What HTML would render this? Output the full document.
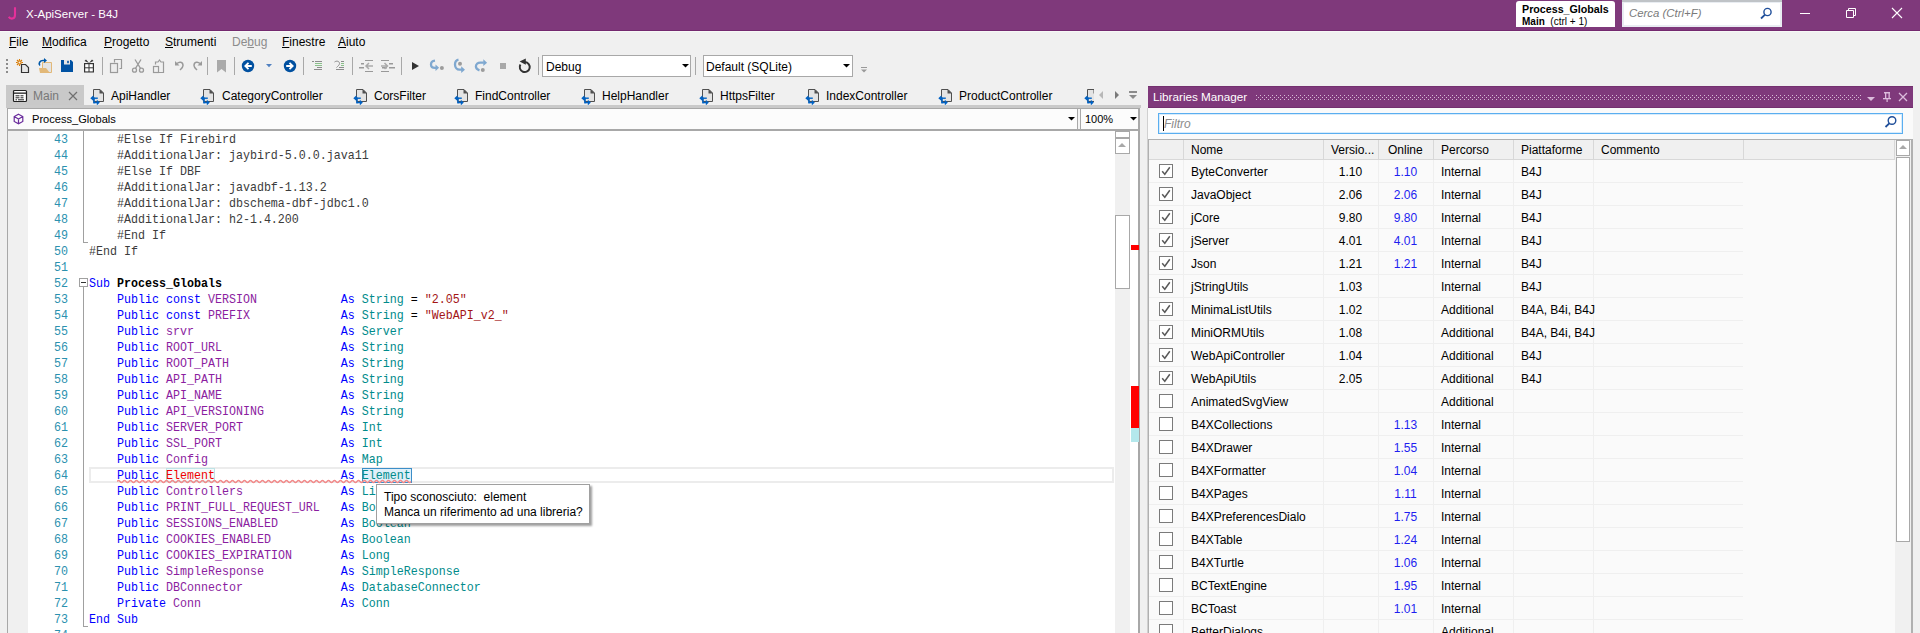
<!DOCTYPE html><html><head><meta charset="utf-8"><style>
*{margin:0;padding:0;box-sizing:border-box}
html,body{width:1920px;height:633px;overflow:hidden;background:#f0f0f0;font-family:"Liberation Sans",sans-serif;font-size:12px;color:#000}
.ab{position:absolute}
.t{position:absolute;white-space:pre;line-height:14px}
.u{text-decoration:underline;text-underline-offset:1px}
.code{position:absolute;font-family:"Liberation Mono",monospace;font-size:11.67px;white-space:pre;line-height:16px;transform:scaleY(1.06);transform-origin:0 11px}
.kw{color:#0000ff}.vr{color:#8b1ea0}.ty{color:#008b8b}.st{color:#a31515}.pp{color:#3c3c3c}.ln{color:#2b91af}
</style></head><body>

<div class="ab" style="left:0;top:0;width:1920px;height:31px;background:#7f397b;border-bottom:1px solid #74296f"></div>
<div class="ab" style="left:0;top:31px;width:1920px;height:1px;background:#f6f8f6"></div>
<svg class="ab" style="left:0;top:0" width="24" height="24"><path d="M15 7.2v7.8c0 2.6-1.3 3.6-3.2 3.6c-1.4 0-2.4-0.6-3-1.8" fill="none" stroke="#e6309a" stroke-width="2.1"/></svg>
<div class="t" style="left:26px;top:7px;color:#fff;font-size:11.5px">X-ApiServer - B4J</div>
<div class="ab" style="left:1516px;top:1px;width:99px;height:26px;background:#fff;border-radius:3px 3px 0 0"></div>
<div class="t" style="left:1522px;top:2px;font-weight:bold;font-size:10.7px">Process_Globals</div>
<div class="t" style="left:1522px;top:15px;font-weight:bold;font-size:10px">Main <span style="font-weight:normal">&nbsp;(ctrl + 1)</span></div>
<div class="ab" style="left:1622px;top:0;width:160px;height:27px;background:#e9edf2;border-top:2px solid #bfc3c7"></div>
<div class="ab" style="left:1624px;top:3px;width:156px;height:22px;background:#fff"></div>
<div class="t" style="left:1629px;top:6px;font-style:italic;color:#7a7a7a;font-size:11.4px">Cerca (Ctrl+F)</div>
<svg class="ab" style="left:1758px;top:6px" width="16" height="14"><circle cx="9.5" cy="6" r="3.6" fill="none" stroke="#1f4e9a" stroke-width="1.4"/><path d="M7 8.6L3 12.5" stroke="#1f4e9a" stroke-width="1.8"/></svg>
<div class="ab" style="left:1800px;top:13px;width:10px;height:1px;background:#fff"></div>
<svg class="ab" style="left:1840px;top:4px" width="20" height="20"><path d="M6.5 6.5h7v7h-7z M8.5 6.5v-2h7v7h-2" fill="none" stroke="#fff" stroke-width="1"/></svg>
<svg class="ab" style="left:1890px;top:6px" width="14" height="14"><path d="M2 2L12 12M12 2L2 12" stroke="#fff" stroke-width="1.1"/></svg>
<div class="t" style="left:9px;top:35px;color:#000"><span class="u">F</span>ile</div>
<div class="t" style="left:42px;top:35px;color:#000"><span class="u">M</span>odifica</div>
<div class="t" style="left:104px;top:35px;color:#000"><span class="u">P</span>rogetto</div>
<div class="t" style="left:165px;top:35px;color:#000"><span class="u">S</span>trumenti</div>
<div class="t" style="left:232px;top:35px;color:#8c8c8c">De<span class="u">b</span>ug</div>
<div class="t" style="left:282px;top:35px;color:#000"><span class="u">F</span>inestre</div>
<div class="t" style="left:338px;top:35px;color:#000"><span class="u">A</span>iuto</div>
<svg class="ab" style="left:0;top:0" width="900" height="82"><rect x="6" y="59" width="2" height="2" fill="#8c8c8c"/><rect x="6" y="63" width="2" height="2" fill="#8c8c8c"/><rect x="6" y="67" width="2" height="2" fill="#8c8c8c"/><rect x="6" y="71" width="2" height="2" fill="#8c8c8c"/><g stroke="#d97a00" stroke-width="1.1"><circle cx="19.5" cy="62.5" r="1.6" fill="none"/><path d="M19.5 59v1.4M19.5 64.6V66M16 62.5h1.4M21.6 62.5H23M17 60l1 1M21 64l1 1M22 60l-1 1M17 65l1-1"/></g><path d="M21.5 64.5h4l3 3v5h-7z" fill="#e6e6e6" stroke="#333" stroke-width="1.2"/><path d="M42.5 62.5h9v10h-9z" fill="#e4e4e4" stroke="#e2b878" stroke-width="1"/><path d="M39 68h7l4 5h-10z" fill="#e2b878"/><path d="M40 65.5c-2-2 0-5 3-5h2" fill="none" stroke="#0058a8" stroke-width="1.6"/><path d="M44 58l3 2.5l-3 2.5z" fill="#0058a8"/><path d="M61 60h10l2 2v10h-12z" fill="#0052a3"/><rect x="64" y="60" width="6" height="4.5" fill="#e6e6e6"/><rect x="67.2" y="60.8" width="1.6" height="2.4" fill="#0052a3"/><rect x="84" y="63" width="10" height="9.5" fill="#333"/><g fill="#fff"><rect x="85.2" y="64.2" width="3.3" height="3.1"/><rect x="89.5" y="64.2" width="3.3" height="3.1"/><rect x="85.2" y="68.3" width="3.3" height="3.1"/><rect x="89.5" y="68.3" width="3.3" height="3.1"/></g><path d="M89 63l-3-3.5l-1.5 1.5zM89 63l3-3.5l1.5 1.5z" fill="#333"/><rect x="102" y="57" width="1" height="18" fill="#a8a8a8"/><rect x="207" y="57" width="1" height="18" fill="#a8a8a8"/><rect x="234" y="57" width="1" height="18" fill="#a8a8a8"/><rect x="303" y="57" width="1" height="18" fill="#a8a8a8"/><rect x="352" y="57" width="1" height="18" fill="#a8a8a8"/><rect x="401" y="57" width="1" height="18" fill="#a8a8a8"/><rect x="538" y="57" width="1" height="18" fill="#a8a8a8"/><rect x="695" y="57" width="1" height="18" fill="#a8a8a8"/><g fill="none" stroke="#9a9a9a" stroke-width="1.2"><path d="M114.5 62.5v-3h7v9h-2"/><rect x="110.5" y="63.5" width="7" height="9" fill="#ececec"/></g><g fill="none" stroke="#9a9a9a" stroke-width="1.3"><circle cx="134.5" cy="70.2" r="2"/><circle cx="141.5" cy="70.2" r="2"/><path d="M135.5 68.3L141 59.5M140.5 68.3L135 59.5"/></g><g fill="none" stroke="#9a9a9a" stroke-width="1.2"><path d="M155.5 64.5v-2.5h2.5l1.5-2l1.5 2h2.5v10.5h-4.5"/><rect x="153.5" y="66.5" width="5" height="6"/></g><g fill="none" stroke="#9a9a9a" stroke-width="1.5"><path d="M177 63.5c2-2 6-2 6 2c0 2-2 3.5-3 4.5"/><path d="M200 63.5c-2-2-6-2-6 2c0 2 2 3.5 3 4.5"/></g><path d="M175 61v4.5h4.5z" fill="#9a9a9a"/><path d="M202 61v4.5h-4.5z" fill="#9a9a9a"/><path d="M217 60h9v12.5l-4.5-3.5l-4.5 3.5z" fill="#aaaaaa"/><circle cx="248" cy="66" r="6.2" fill="#0050a0"/><path d="M251.8 66h-6M248.5 62.8l-3.2 3.2l3.2 3.2" fill="none" stroke="#fff" stroke-width="1.8"/><path d="M266 64h6l-3 3.3z" fill="#5080c0"/><circle cx="290" cy="66" r="6.2" fill="#0050a0"/><path d="M286.2 66h6M289.5 62.8l3.2 3.2l-3.2 3.2" fill="none" stroke="#fff" stroke-width="1.8"/><g fill="#8c8c8c"><rect x="312" y="61" width="2" height="1"/><rect x="315" y="61" width="7" height="1"/><rect x="317" y="67" width="5" height="1"/><rect x="314" y="69" width="8" height="1"/></g><g fill="#8ac08a"><rect x="315" y="63" width="7" height="1"/><rect x="315" y="65" width="7" height="1"/></g><g fill="#8c8c8c"><rect x="341" y="61" width="3" height="1"/><rect x="339" y="67" width="5" height="1"/><rect x="336" y="69" width="8" height="1"/></g><g fill="#8ac08a"><rect x="341" y="63" width="3" height="1"/><rect x="341" y="65" width="3" height="1"/></g><path d="M334.5 62c2-1.5 5-1 5 1.5c0 1.5-2 3-3 4" fill="none" stroke="#8c8c8c" stroke-width="1"/><g fill="#999"><rect x="365" y="60" width="8" height="1"/><rect x="365" y="71" width="8" height="1"/><rect x="361" y="63" width="3" height="1.5"/><rect x="359" y="67" width="5" height="1.5"/><rect x="382" y="67" width="5" height="1.5"/><rect x="389" y="63" width="4" height="1.5"/><rect x="389" y="67" width="6" height="1.5"/><rect x="381" y="60" width="8" height="1"/><rect x="381" y="71" width="8" height="1"/></g><g fill="none" stroke="#aaa" stroke-width="1.5"><path d="M373 66h-7M369 63l-3 3l3 3M381 66h7M384.5 63l3 3l-3 3"/></g><path d="M412 62v8l7-4z" fill="#333"/><g fill="none" stroke="#7fa8d0" stroke-width="2.3" stroke-linecap="butt"><path d="M435 60.6c-2.6 0.3-4 2-4 3.8c0 2.2 1.8 3.4 4 3.4h1.5"/><path d="M458.5 59.6c-2.6 0.5-3.5 2.6-3.5 4.9c0 3 2 5.2 4.5 5.2h2.5"/><path d="M479.5 70.4c-2.4-0.8-3.6-2.2-3.6-3.8c0-2.4 2-3.9 4.4-3.9h3.5"/></g><g fill="#7fa8d0"><path d="M435.5 64.6l3.6 3.2l-3.6 3.2z"/><path d="M461.2 66.3l3.8 3.4l-3.8 3.4z"/><path d="M483.3 59.3l3.8 3.4l-3.8 3.4z"/></g><g fill="#9c9c9c"><circle cx="441.9" cy="68" r="2"/><circle cx="460" cy="63.8" r="2"/><circle cx="482.8" cy="69.9" r="2"/></g><rect x="500" y="63" width="6" height="6" fill="#a8a8a8"/><path d="M520.4 64.6A5 5 0 1 0 525 62.1" fill="none" stroke="#333" stroke-width="2"/><path d="M519.6 61.6L525.8 58.4V64.8z" fill="#333"/></svg>
<div class="ab" style="left:542px;top:55px;width:149px;height:22px;background:#fff;border:1px solid #a8a8a8"></div>
<div class="t" style="left:546px;top:60px">Debug</div>
<svg class="ab" style="left:682px;top:64px" width="8" height="5"><path d="M0 0h7l-3.5 3.5z" fill="#000"/></svg>
<div class="ab" style="left:703px;top:55px;width:150px;height:22px;background:#fff;border:1px solid #a8a8a8"></div>
<div class="t" style="left:706px;top:60px">Default (SQLite)</div>
<svg class="ab" style="left:843px;top:64px" width="8" height="5"><path d="M0 0h7l-3.5 3.5z" fill="#000"/></svg>
<svg class="ab" style="left:861px;top:67px" width="7" height="7"><rect x="0" y="0" width="6" height="1" fill="#999"/><path d="M0 2.5h6l-3 3z" fill="#999"/></svg>
<div class="ab" style="left:6px;top:85px;width:78px;height:20px;background:#c9c9c9"></div>
<div class="ab" style="left:6px;top:105px;width:1135px;height:3px;background:#cacaca"></div>
<svg class="ab" style="left:12px;top:89px" width="16" height="14"><rect x="1.5" y="1.5" width="13" height="11" rx="1" fill="#fff" stroke="#222" stroke-width="1.2"/><rect x="1.5" y="3.5" width="13" height="1.3" fill="#222"/><g fill="#222"><rect x="3.5" y="6.3" width="4" height="1"/><rect x="8.5" y="6.3" width="3" height="1"/><rect x="3.5" y="8.3" width="4" height="1"/><rect x="8.5" y="8.3" width="3" height="1"/><rect x="3.5" y="10.3" width="1.5" height="1"/><rect x="6" y="10.3" width="6" height="1"/></g></svg>
<div class="t" style="left:33px;top:89px;color:#787878">Main</div>
<svg class="ab" style="left:68px;top:91px" width="10" height="10"><path d="M1 1L9 9M9 1L1 9" stroke="#707070" stroke-width="1.2"/></svg>
<svg class="ab" style="left:90px;top:88px" width="15" height="17"><path d="M3.5 1.5h6.5l3.5 3.5v8.5h-10z" fill="#e4e4e4" stroke="#505050" stroke-width="1"/><path d="M9.5 1v4.5h4.5z" fill="#505050"/><rect x="1" y="8" width="8.5" height="8.5" fill="#f0f0f0" opacity="0.0"/><g fill="#0062c4"><path d="M0.3 10.2l3.2-2.9v5.8z"/><rect x="3" y="9.5" width="4.8" height="1.4"/><rect x="3.3" y="9.5" width="1.5" height="5.8"/><rect x="3.3" y="13.9" width="3.8" height="1.4"/><path d="M9.8 14.6l-3-2.8v5.6z"/></g></svg>
<div class="t" style="left:111px;top:89px">ApiHandler</div>
<svg class="ab" style="left:200px;top:88px" width="15" height="17"><path d="M3.5 1.5h6.5l3.5 3.5v8.5h-10z" fill="#e4e4e4" stroke="#505050" stroke-width="1"/><path d="M9.5 1v4.5h4.5z" fill="#505050"/><rect x="1" y="8" width="8.5" height="8.5" fill="#f0f0f0" opacity="0.0"/><g fill="#0062c4"><path d="M0.3 10.2l3.2-2.9v5.8z"/><rect x="3" y="9.5" width="4.8" height="1.4"/><rect x="3.3" y="9.5" width="1.5" height="5.8"/><rect x="3.3" y="13.9" width="3.8" height="1.4"/><path d="M9.8 14.6l-3-2.8v5.6z"/></g></svg>
<div class="t" style="left:222px;top:89px">CategoryController</div>
<svg class="ab" style="left:353px;top:88px" width="15" height="17"><path d="M3.5 1.5h6.5l3.5 3.5v8.5h-10z" fill="#e4e4e4" stroke="#505050" stroke-width="1"/><path d="M9.5 1v4.5h4.5z" fill="#505050"/><rect x="1" y="8" width="8.5" height="8.5" fill="#f0f0f0" opacity="0.0"/><g fill="#0062c4"><path d="M0.3 10.2l3.2-2.9v5.8z"/><rect x="3" y="9.5" width="4.8" height="1.4"/><rect x="3.3" y="9.5" width="1.5" height="5.8"/><rect x="3.3" y="13.9" width="3.8" height="1.4"/><path d="M9.8 14.6l-3-2.8v5.6z"/></g></svg>
<div class="t" style="left:374px;top:89px">CorsFilter</div>
<svg class="ab" style="left:454px;top:88px" width="15" height="17"><path d="M3.5 1.5h6.5l3.5 3.5v8.5h-10z" fill="#e4e4e4" stroke="#505050" stroke-width="1"/><path d="M9.5 1v4.5h4.5z" fill="#505050"/><rect x="1" y="8" width="8.5" height="8.5" fill="#f0f0f0" opacity="0.0"/><g fill="#0062c4"><path d="M0.3 10.2l3.2-2.9v5.8z"/><rect x="3" y="9.5" width="4.8" height="1.4"/><rect x="3.3" y="9.5" width="1.5" height="5.8"/><rect x="3.3" y="13.9" width="3.8" height="1.4"/><path d="M9.8 14.6l-3-2.8v5.6z"/></g></svg>
<div class="t" style="left:475px;top:89px">FindController</div>
<svg class="ab" style="left:581px;top:88px" width="15" height="17"><path d="M3.5 1.5h6.5l3.5 3.5v8.5h-10z" fill="#e4e4e4" stroke="#505050" stroke-width="1"/><path d="M9.5 1v4.5h4.5z" fill="#505050"/><rect x="1" y="8" width="8.5" height="8.5" fill="#f0f0f0" opacity="0.0"/><g fill="#0062c4"><path d="M0.3 10.2l3.2-2.9v5.8z"/><rect x="3" y="9.5" width="4.8" height="1.4"/><rect x="3.3" y="9.5" width="1.5" height="5.8"/><rect x="3.3" y="13.9" width="3.8" height="1.4"/><path d="M9.8 14.6l-3-2.8v5.6z"/></g></svg>
<div class="t" style="left:602px;top:89px">HelpHandler</div>
<svg class="ab" style="left:699px;top:88px" width="15" height="17"><path d="M3.5 1.5h6.5l3.5 3.5v8.5h-10z" fill="#e4e4e4" stroke="#505050" stroke-width="1"/><path d="M9.5 1v4.5h4.5z" fill="#505050"/><rect x="1" y="8" width="8.5" height="8.5" fill="#f0f0f0" opacity="0.0"/><g fill="#0062c4"><path d="M0.3 10.2l3.2-2.9v5.8z"/><rect x="3" y="9.5" width="4.8" height="1.4"/><rect x="3.3" y="9.5" width="1.5" height="5.8"/><rect x="3.3" y="13.9" width="3.8" height="1.4"/><path d="M9.8 14.6l-3-2.8v5.6z"/></g></svg>
<div class="t" style="left:720px;top:89px">HttpsFilter</div>
<svg class="ab" style="left:805px;top:88px" width="15" height="17"><path d="M3.5 1.5h6.5l3.5 3.5v8.5h-10z" fill="#e4e4e4" stroke="#505050" stroke-width="1"/><path d="M9.5 1v4.5h4.5z" fill="#505050"/><rect x="1" y="8" width="8.5" height="8.5" fill="#f0f0f0" opacity="0.0"/><g fill="#0062c4"><path d="M0.3 10.2l3.2-2.9v5.8z"/><rect x="3" y="9.5" width="4.8" height="1.4"/><rect x="3.3" y="9.5" width="1.5" height="5.8"/><rect x="3.3" y="13.9" width="3.8" height="1.4"/><path d="M9.8 14.6l-3-2.8v5.6z"/></g></svg>
<div class="t" style="left:826px;top:89px">IndexController</div>
<svg class="ab" style="left:938px;top:88px" width="15" height="17"><path d="M3.5 1.5h6.5l3.5 3.5v8.5h-10z" fill="#e4e4e4" stroke="#505050" stroke-width="1"/><path d="M9.5 1v4.5h4.5z" fill="#505050"/><rect x="1" y="8" width="8.5" height="8.5" fill="#f0f0f0" opacity="0.0"/><g fill="#0062c4"><path d="M0.3 10.2l3.2-2.9v5.8z"/><rect x="3" y="9.5" width="4.8" height="1.4"/><rect x="3.3" y="9.5" width="1.5" height="5.8"/><rect x="3.3" y="13.9" width="3.8" height="1.4"/><path d="M9.8 14.6l-3-2.8v5.6z"/></g></svg>
<div class="t" style="left:959px;top:89px">ProductController</div>
<div style="position:absolute;left:1083px;top:0;width:11px;height:108px;overflow:hidden"><svg class="ab" style="left:1px;top:88px" width="15" height="17"><path d="M3.5 1.5h6.5l3.5 3.5v8.5h-10z" fill="#e4e4e4" stroke="#505050" stroke-width="1"/><path d="M9.5 1v4.5h4.5z" fill="#505050"/><rect x="1" y="8" width="8.5" height="8.5" fill="#f0f0f0" opacity="0.0"/><g fill="#0062c4"><path d="M0.3 10.2l3.2-2.9v5.8z"/><rect x="3" y="9.5" width="4.8" height="1.4"/><rect x="3.3" y="9.5" width="1.5" height="5.8"/><rect x="3.3" y="13.9" width="3.8" height="1.4"/><path d="M9.8 14.6l-3-2.8v5.6z"/></g></svg></div>
<svg class="ab" style="left:1097px;top:90px" width="44" height="10"><path d="M6 1v8l-4-4z" fill="#b8b8b8"/><path d="M18 1v8l4-4z" fill="#7a7a7a"/><rect x="32" y="1" width="8" height="2" fill="#8c8c8c"/><path d="M32 5h8l-4 4z" fill="#8c8c8c"/></svg>
<div class="ab" style="left:7px;top:108px;width:1133px;height:525px;background:#fff;border-left:1px solid #a8a8a8;border-right:2px solid #a8a8a8;border-top:1px solid #a8a8a8"></div>
<div class="ab" style="left:8px;top:109px;width:1070px;height:20px;background:#fcfcfc;border-right:1px solid #a8a8a8"></div>
<div class="ab" style="left:1078px;top:109px;width:2px;height:20px;background:#f4f4f4"></div>
<div class="ab" style="left:1080px;top:109px;width:58px;height:20px;background:#fcfcfc;border-left:1px solid #a8a8a8"></div>
<div class="ab" style="left:8px;top:129px;width:1130px;height:2px;background:#a8a8a8"></div>
<svg class="ab" style="left:13px;top:113px" width="12" height="12"><path d="M5.5 1.2L9.8 3.6v4.8L5.5 10.8L1.2 8.4V3.6z M1.2 3.6L5.5 6L9.8 3.6M5.5 6v4.8" fill="none" stroke="#6a2c9c" stroke-width="1.2"/></svg>
<div class="t" style="left:32px;top:112px;font-size:11.1px">Process_Globals</div>
<svg class="ab" style="left:1068px;top:117px" width="8" height="5"><path d="M0 0h7l-3.5 3.5z" fill="#000"/></svg>
<div class="t" style="left:1085px;top:112px;font-size:11px">100%</div>
<svg class="ab" style="left:1130px;top:117px" width="8" height="5"><path d="M0 0h7l-3.5 3.5z" fill="#000"/></svg>
<div class="ab" style="left:8px;top:131px;width:20px;height:502px;background:#f0f0f0"></div>
<div class="ab" style="left:89px;top:467px;width:1025px;height:16px;border:2px solid #ececec"></div>
<div class="ab" style="left:166px;top:468px;width:49px;height:14px;border:1px solid #bfe3e6;background:#f4fbfb"></div>
<div class="ab" style="left:362px;top:468px;width:50px;height:15px;border:1px solid #3c8ec8;background:#dff0fa"></div>
<div class="code ln" style="left:40px;top:132px;width:28px;text-align:right">43</div>
<div class="code" style="left:89px;top:132px">    <span class="pp">#Else If Firebird</span></div>
<div class="code ln" style="left:40px;top:148px;width:28px;text-align:right">44</div>
<div class="code" style="left:89px;top:148px">    <span class="pp">#AdditionalJar: jaybird-5.0.0.java11</span></div>
<div class="code ln" style="left:40px;top:164px;width:28px;text-align:right">45</div>
<div class="code" style="left:89px;top:164px">    <span class="pp">#Else If DBF</span></div>
<div class="code ln" style="left:40px;top:180px;width:28px;text-align:right">46</div>
<div class="code" style="left:89px;top:180px">    <span class="pp">#AdditionalJar: javadbf-1.13.2</span></div>
<div class="code ln" style="left:40px;top:196px;width:28px;text-align:right">47</div>
<div class="code" style="left:89px;top:196px">    <span class="pp">#AdditionalJar: dbschema-dbf-jdbc1.0</span></div>
<div class="code ln" style="left:40px;top:212px;width:28px;text-align:right">48</div>
<div class="code" style="left:89px;top:212px">    <span class="pp">#AdditionalJar: h2-1.4.200</span></div>
<div class="code ln" style="left:40px;top:228px;width:28px;text-align:right">49</div>
<div class="code" style="left:89px;top:228px">    <span class="pp">#End If</span></div>
<div class="code ln" style="left:40px;top:244px;width:28px;text-align:right">50</div>
<div class="code" style="left:89px;top:244px"><span class="pp">#End If</span></div>
<div class="code ln" style="left:40px;top:260px;width:28px;text-align:right">51</div>
<div class="code ln" style="left:40px;top:276px;width:28px;text-align:right">52</div>
<div class="code" style="left:89px;top:276px"><span class="kw">Sub</span> <b>Process_Globals</b></div>
<div class="code ln" style="left:40px;top:292px;width:28px;text-align:right">53</div>
<div class="code" style="left:89px;top:292px">    <span class="kw">Public const</span> <span class="vr">VERSION</span>            <span class="kw">As</span> <span class="ty">String</span> = <span class="st">"2.05"</span></div>
<div class="code ln" style="left:40px;top:308px;width:28px;text-align:right">54</div>
<div class="code" style="left:89px;top:308px">    <span class="kw">Public const</span> <span class="vr">PREFIX</span>             <span class="kw">As</span> <span class="ty">String</span> = <span class="st">"WebAPI_v2_"</span></div>
<div class="code ln" style="left:40px;top:324px;width:28px;text-align:right">55</div>
<div class="code" style="left:89px;top:324px">    <span class="kw">Public</span> <span class="vr">srvr</span>                     <span class="kw">As</span> <span class="ty">Server</span></div>
<div class="code ln" style="left:40px;top:340px;width:28px;text-align:right">56</div>
<div class="code" style="left:89px;top:340px">    <span class="kw">Public</span> <span class="vr">ROOT_URL</span>                 <span class="kw">As</span> <span class="ty">String</span></div>
<div class="code ln" style="left:40px;top:356px;width:28px;text-align:right">57</div>
<div class="code" style="left:89px;top:356px">    <span class="kw">Public</span> <span class="vr">ROOT_PATH</span>                <span class="kw">As</span> <span class="ty">String</span></div>
<div class="code ln" style="left:40px;top:372px;width:28px;text-align:right">58</div>
<div class="code" style="left:89px;top:372px">    <span class="kw">Public</span> <span class="vr">API_PATH</span>                 <span class="kw">As</span> <span class="ty">String</span></div>
<div class="code ln" style="left:40px;top:388px;width:28px;text-align:right">59</div>
<div class="code" style="left:89px;top:388px">    <span class="kw">Public</span> <span class="vr">API_NAME</span>                 <span class="kw">As</span> <span class="ty">String</span></div>
<div class="code ln" style="left:40px;top:404px;width:28px;text-align:right">60</div>
<div class="code" style="left:89px;top:404px">    <span class="kw">Public</span> <span class="vr">API_VERSIONING</span>           <span class="kw">As</span> <span class="ty">String</span></div>
<div class="code ln" style="left:40px;top:420px;width:28px;text-align:right">61</div>
<div class="code" style="left:89px;top:420px">    <span class="kw">Public</span> <span class="vr">SERVER_PORT</span>              <span class="kw">As</span> <span class="ty">Int</span></div>
<div class="code ln" style="left:40px;top:436px;width:28px;text-align:right">62</div>
<div class="code" style="left:89px;top:436px">    <span class="kw">Public</span> <span class="vr">SSL_PORT</span>                 <span class="kw">As</span> <span class="ty">Int</span></div>
<div class="code ln" style="left:40px;top:452px;width:28px;text-align:right">63</div>
<div class="code" style="left:89px;top:452px">    <span class="kw">Public</span> <span class="vr">Config</span>                   <span class="kw">As</span> <span class="ty">Map</span></div>
<div class="code ln" style="left:40px;top:468px;width:28px;text-align:right">64</div>
<div class="code" style="left:89px;top:468px">    <span class="kw">Public</span> <span class="vr" style="color:#f00000">Element</span>                  <span class="kw">As</span> <span class="ty">Element</span></div>
<div class="code ln" style="left:40px;top:484px;width:28px;text-align:right">65</div>
<div class="code" style="left:89px;top:484px">    <span class="kw">Public</span> <span class="vr">Controllers</span>              <span class="kw">As</span> <span class="ty">List</span></div>
<div class="code ln" style="left:40px;top:500px;width:28px;text-align:right">66</div>
<div class="code" style="left:89px;top:500px">    <span class="kw">Public</span> <span class="vr">PRINT_FULL_REQUEST_URL</span>   <span class="kw">As</span> <span class="ty">Boolean</span></div>
<div class="code ln" style="left:40px;top:516px;width:28px;text-align:right">67</div>
<div class="code" style="left:89px;top:516px">    <span class="kw">Public</span> <span class="vr">SESSIONS_ENABLED</span>         <span class="kw">As</span> <span class="ty">Boolean</span></div>
<div class="code ln" style="left:40px;top:532px;width:28px;text-align:right">68</div>
<div class="code" style="left:89px;top:532px">    <span class="kw">Public</span> <span class="vr">COOKIES_ENABLED</span>          <span class="kw">As</span> <span class="ty">Boolean</span></div>
<div class="code ln" style="left:40px;top:548px;width:28px;text-align:right">69</div>
<div class="code" style="left:89px;top:548px">    <span class="kw">Public</span> <span class="vr">COOKIES_EXPIRATION</span>       <span class="kw">As</span> <span class="ty">Long</span></div>
<div class="code ln" style="left:40px;top:564px;width:28px;text-align:right">70</div>
<div class="code" style="left:89px;top:564px">    <span class="kw">Public</span> <span class="vr">SimpleResponse</span>           <span class="kw">As</span> <span class="ty">SimpleResponse</span></div>
<div class="code ln" style="left:40px;top:580px;width:28px;text-align:right">71</div>
<div class="code" style="left:89px;top:580px">    <span class="kw">Public</span> <span class="vr">DBConnector</span>              <span class="kw">As</span> <span class="ty">DatabaseConnector</span></div>
<div class="code ln" style="left:40px;top:596px;width:28px;text-align:right">72</div>
<div class="code" style="left:89px;top:596px">    <span class="kw">Private</span> <span class="vr">Conn</span>                    <span class="kw">As</span> <span class="ty">Conn</span></div>
<div class="code ln" style="left:40px;top:612px;width:28px;text-align:right">73</div>
<div class="code" style="left:89px;top:612px"><span class="kw">End Sub</span></div>
<div class="code ln" style="left:40px;top:628px;width:28px;text-align:right">74</div>
<div class="ab" style="left:83px;top:131px;width:1px;height:112px;background:#a0a0a0"></div>
<div class="ab" style="left:83px;top:242px;width:5px;height:1px;background:#a0a0a0"></div>
<svg class="ab" style="left:79px;top:278px" width="10" height="10"><rect x="0.5" y="0.5" width="8" height="8" fill="#fff" stroke="#a0a0a0"/><rect x="2" y="4" width="5" height="1" fill="#333"/></svg>
<div class="ab" style="left:83px;top:287px;width:1px;height:340px;background:#a0a0a0"></div>
<div class="ab" style="left:83px;top:626px;width:5px;height:1px;background:#a0a0a0"></div>
<svg class="ab" style="left:117px;top:478px" width="296" height="7"><path d="M0 3.5 Q1.5 1.5 3 3.5 T6 3.5 T9 3.5 T12 3.5 T15 3.5 T18 3.5 T21 3.5 T24 3.5 T27 3.5 T30 3.5 T33 3.5 T36 3.5 T39 3.5 T42 3.5 T45 3.5 T48 3.5 T51 3.5 T54 3.5 T57 3.5 T60 3.5 T63 3.5 T66 3.5 T69 3.5 T72 3.5 T75 3.5 T78 3.5 T81 3.5 T84 3.5 T87 3.5 T90 3.5 T93 3.5 T96 3.5 T99 3.5 T102 3.5 T105 3.5 T108 3.5 T111 3.5 T114 3.5 T117 3.5 T120 3.5 T123 3.5 T126 3.5 T129 3.5 T132 3.5 T135 3.5 T138 3.5 T141 3.5 T144 3.5 T147 3.5 T150 3.5 T153 3.5 T156 3.5 T159 3.5 T162 3.5 T165 3.5 T168 3.5 T171 3.5 T174 3.5 T177 3.5 T180 3.5 T183 3.5 T186 3.5 T189 3.5 T192 3.5 T195 3.5 T198 3.5 T201 3.5 T204 3.5 T207 3.5 T210 3.5 T213 3.5 T216 3.5 T219 3.5 T222 3.5 T225 3.5 T228 3.5 T231 3.5 T234 3.5 T237 3.5 T240 3.5 T243 3.5 T246 3.5 T249 3.5 T252 3.5 T255 3.5 T258 3.5 T261 3.5 T264 3.5 T267 3.5 T270 3.5 T273 3.5 T276 3.5 T279 3.5 T282 3.5 T285 3.5 T288 3.5 T291 3.5 T294 3.5" fill="none" stroke="#f28a8a" stroke-width="1.3"/></svg>
<div class="ab" style="left:376px;top:484px;width:214px;height:40px;background:#fff;border:1px solid #a0a0a0;box-shadow:2px 2px 2px rgba(0,0,0,0.38)"></div>
<div class="t" style="left:384px;top:490px">Tipo sconosciuto:  element</div>
<div class="t" style="left:384px;top:505px">Manca un riferimento ad una libreria?</div>
<div class="ab" style="left:1115px;top:131px;width:15px;height:502px;background:#f0f0f0"></div>
<div class="ab" style="left:1115px;top:131px;width:15px;height:7px;background:#fff;border:1px solid #a8a8a8"></div>
<div class="ab" style="left:1115px;top:138px;width:15px;height:16px;background:#fff;border:1px solid #a8a8a8"></div>
<svg class="ab" style="left:1118px;top:143px" width="9" height="5"><path d="M0 4h8l-4-4z" fill="#a8a8a8"/></svg>
<div class="ab" style="left:1115px;top:215px;width:15px;height:74px;background:#fff;border:1px solid #a8a8a8"></div>
<div class="ab" style="left:1131px;top:245px;width:8px;height:5px;background:#ff0000"></div>
<div class="ab" style="left:1131px;top:386px;width:8px;height:42px;background:#ff0000"></div>
<div class="ab" style="left:1131px;top:428px;width:8px;height:14px;background:#b4e8ec"></div>
<div class="ab" style="left:1148px;top:86px;width:765px;height:22px;background:#7f397b;border-top:1px solid #74306f;border-bottom:1px solid #74306f"></div>
<div class="t" style="left:1153px;top:90px;color:#fff;font-size:11.7px">Libraries Manager</div>
<svg class="ab" style="left:1148px;top:86px" width="765" height="22"><g fill="#d8bcd6"><rect x="108" y="9" width="1" height="1"/><rect x="108" y="13" width="1" height="1"/><rect x="110" y="11" width="1" height="1"/><rect x="112" y="9" width="1" height="1"/><rect x="112" y="13" width="1" height="1"/><rect x="114" y="11" width="1" height="1"/><rect x="116" y="9" width="1" height="1"/><rect x="116" y="13" width="1" height="1"/><rect x="118" y="11" width="1" height="1"/><rect x="120" y="9" width="1" height="1"/><rect x="120" y="13" width="1" height="1"/><rect x="122" y="11" width="1" height="1"/><rect x="124" y="9" width="1" height="1"/><rect x="124" y="13" width="1" height="1"/><rect x="126" y="11" width="1" height="1"/><rect x="128" y="9" width="1" height="1"/><rect x="128" y="13" width="1" height="1"/><rect x="130" y="11" width="1" height="1"/><rect x="132" y="9" width="1" height="1"/><rect x="132" y="13" width="1" height="1"/><rect x="134" y="11" width="1" height="1"/><rect x="136" y="9" width="1" height="1"/><rect x="136" y="13" width="1" height="1"/><rect x="138" y="11" width="1" height="1"/><rect x="140" y="9" width="1" height="1"/><rect x="140" y="13" width="1" height="1"/><rect x="142" y="11" width="1" height="1"/><rect x="144" y="9" width="1" height="1"/><rect x="144" y="13" width="1" height="1"/><rect x="146" y="11" width="1" height="1"/><rect x="148" y="9" width="1" height="1"/><rect x="148" y="13" width="1" height="1"/><rect x="150" y="11" width="1" height="1"/><rect x="152" y="9" width="1" height="1"/><rect x="152" y="13" width="1" height="1"/><rect x="154" y="11" width="1" height="1"/><rect x="156" y="9" width="1" height="1"/><rect x="156" y="13" width="1" height="1"/><rect x="158" y="11" width="1" height="1"/><rect x="160" y="9" width="1" height="1"/><rect x="160" y="13" width="1" height="1"/><rect x="162" y="11" width="1" height="1"/><rect x="164" y="9" width="1" height="1"/><rect x="164" y="13" width="1" height="1"/><rect x="166" y="11" width="1" height="1"/><rect x="168" y="9" width="1" height="1"/><rect x="168" y="13" width="1" height="1"/><rect x="170" y="11" width="1" height="1"/><rect x="172" y="9" width="1" height="1"/><rect x="172" y="13" width="1" height="1"/><rect x="174" y="11" width="1" height="1"/><rect x="176" y="9" width="1" height="1"/><rect x="176" y="13" width="1" height="1"/><rect x="178" y="11" width="1" height="1"/><rect x="180" y="9" width="1" height="1"/><rect x="180" y="13" width="1" height="1"/><rect x="182" y="11" width="1" height="1"/><rect x="184" y="9" width="1" height="1"/><rect x="184" y="13" width="1" height="1"/><rect x="186" y="11" width="1" height="1"/><rect x="188" y="9" width="1" height="1"/><rect x="188" y="13" width="1" height="1"/><rect x="190" y="11" width="1" height="1"/><rect x="192" y="9" width="1" height="1"/><rect x="192" y="13" width="1" height="1"/><rect x="194" y="11" width="1" height="1"/><rect x="196" y="9" width="1" height="1"/><rect x="196" y="13" width="1" height="1"/><rect x="198" y="11" width="1" height="1"/><rect x="200" y="9" width="1" height="1"/><rect x="200" y="13" width="1" height="1"/><rect x="202" y="11" width="1" height="1"/><rect x="204" y="9" width="1" height="1"/><rect x="204" y="13" width="1" height="1"/><rect x="206" y="11" width="1" height="1"/><rect x="208" y="9" width="1" height="1"/><rect x="208" y="13" width="1" height="1"/><rect x="210" y="11" width="1" height="1"/><rect x="212" y="9" width="1" height="1"/><rect x="212" y="13" width="1" height="1"/><rect x="214" y="11" width="1" height="1"/><rect x="216" y="9" width="1" height="1"/><rect x="216" y="13" width="1" height="1"/><rect x="218" y="11" width="1" height="1"/><rect x="220" y="9" width="1" height="1"/><rect x="220" y="13" width="1" height="1"/><rect x="222" y="11" width="1" height="1"/><rect x="224" y="9" width="1" height="1"/><rect x="224" y="13" width="1" height="1"/><rect x="226" y="11" width="1" height="1"/><rect x="228" y="9" width="1" height="1"/><rect x="228" y="13" width="1" height="1"/><rect x="230" y="11" width="1" height="1"/><rect x="232" y="9" width="1" height="1"/><rect x="232" y="13" width="1" height="1"/><rect x="234" y="11" width="1" height="1"/><rect x="236" y="9" width="1" height="1"/><rect x="236" y="13" width="1" height="1"/><rect x="238" y="11" width="1" height="1"/><rect x="240" y="9" width="1" height="1"/><rect x="240" y="13" width="1" height="1"/><rect x="242" y="11" width="1" height="1"/><rect x="244" y="9" width="1" height="1"/><rect x="244" y="13" width="1" height="1"/><rect x="246" y="11" width="1" height="1"/><rect x="248" y="9" width="1" height="1"/><rect x="248" y="13" width="1" height="1"/><rect x="250" y="11" width="1" height="1"/><rect x="252" y="9" width="1" height="1"/><rect x="252" y="13" width="1" height="1"/><rect x="254" y="11" width="1" height="1"/><rect x="256" y="9" width="1" height="1"/><rect x="256" y="13" width="1" height="1"/><rect x="258" y="11" width="1" height="1"/><rect x="260" y="9" width="1" height="1"/><rect x="260" y="13" width="1" height="1"/><rect x="262" y="11" width="1" height="1"/><rect x="264" y="9" width="1" height="1"/><rect x="264" y="13" width="1" height="1"/><rect x="266" y="11" width="1" height="1"/><rect x="268" y="9" width="1" height="1"/><rect x="268" y="13" width="1" height="1"/><rect x="270" y="11" width="1" height="1"/><rect x="272" y="9" width="1" height="1"/><rect x="272" y="13" width="1" height="1"/><rect x="274" y="11" width="1" height="1"/><rect x="276" y="9" width="1" height="1"/><rect x="276" y="13" width="1" height="1"/><rect x="278" y="11" width="1" height="1"/><rect x="280" y="9" width="1" height="1"/><rect x="280" y="13" width="1" height="1"/><rect x="282" y="11" width="1" height="1"/><rect x="284" y="9" width="1" height="1"/><rect x="284" y="13" width="1" height="1"/><rect x="286" y="11" width="1" height="1"/><rect x="288" y="9" width="1" height="1"/><rect x="288" y="13" width="1" height="1"/><rect x="290" y="11" width="1" height="1"/><rect x="292" y="9" width="1" height="1"/><rect x="292" y="13" width="1" height="1"/><rect x="294" y="11" width="1" height="1"/><rect x="296" y="9" width="1" height="1"/><rect x="296" y="13" width="1" height="1"/><rect x="298" y="11" width="1" height="1"/><rect x="300" y="9" width="1" height="1"/><rect x="300" y="13" width="1" height="1"/><rect x="302" y="11" width="1" height="1"/><rect x="304" y="9" width="1" height="1"/><rect x="304" y="13" width="1" height="1"/><rect x="306" y="11" width="1" height="1"/><rect x="308" y="9" width="1" height="1"/><rect x="308" y="13" width="1" height="1"/><rect x="310" y="11" width="1" height="1"/><rect x="312" y="9" width="1" height="1"/><rect x="312" y="13" width="1" height="1"/><rect x="314" y="11" width="1" height="1"/><rect x="316" y="9" width="1" height="1"/><rect x="316" y="13" width="1" height="1"/><rect x="318" y="11" width="1" height="1"/><rect x="320" y="9" width="1" height="1"/><rect x="320" y="13" width="1" height="1"/><rect x="322" y="11" width="1" height="1"/><rect x="324" y="9" width="1" height="1"/><rect x="324" y="13" width="1" height="1"/><rect x="326" y="11" width="1" height="1"/><rect x="328" y="9" width="1" height="1"/><rect x="328" y="13" width="1" height="1"/><rect x="330" y="11" width="1" height="1"/><rect x="332" y="9" width="1" height="1"/><rect x="332" y="13" width="1" height="1"/><rect x="334" y="11" width="1" height="1"/><rect x="336" y="9" width="1" height="1"/><rect x="336" y="13" width="1" height="1"/><rect x="338" y="11" width="1" height="1"/><rect x="340" y="9" width="1" height="1"/><rect x="340" y="13" width="1" height="1"/><rect x="342" y="11" width="1" height="1"/><rect x="344" y="9" width="1" height="1"/><rect x="344" y="13" width="1" height="1"/><rect x="346" y="11" width="1" height="1"/><rect x="348" y="9" width="1" height="1"/><rect x="348" y="13" width="1" height="1"/><rect x="350" y="11" width="1" height="1"/><rect x="352" y="9" width="1" height="1"/><rect x="352" y="13" width="1" height="1"/><rect x="354" y="11" width="1" height="1"/><rect x="356" y="9" width="1" height="1"/><rect x="356" y="13" width="1" height="1"/><rect x="358" y="11" width="1" height="1"/><rect x="360" y="9" width="1" height="1"/><rect x="360" y="13" width="1" height="1"/><rect x="362" y="11" width="1" height="1"/><rect x="364" y="9" width="1" height="1"/><rect x="364" y="13" width="1" height="1"/><rect x="366" y="11" width="1" height="1"/><rect x="368" y="9" width="1" height="1"/><rect x="368" y="13" width="1" height="1"/><rect x="370" y="11" width="1" height="1"/><rect x="372" y="9" width="1" height="1"/><rect x="372" y="13" width="1" height="1"/><rect x="374" y="11" width="1" height="1"/><rect x="376" y="9" width="1" height="1"/><rect x="376" y="13" width="1" height="1"/><rect x="378" y="11" width="1" height="1"/><rect x="380" y="9" width="1" height="1"/><rect x="380" y="13" width="1" height="1"/><rect x="382" y="11" width="1" height="1"/><rect x="384" y="9" width="1" height="1"/><rect x="384" y="13" width="1" height="1"/><rect x="386" y="11" width="1" height="1"/><rect x="388" y="9" width="1" height="1"/><rect x="388" y="13" width="1" height="1"/><rect x="390" y="11" width="1" height="1"/><rect x="392" y="9" width="1" height="1"/><rect x="392" y="13" width="1" height="1"/><rect x="394" y="11" width="1" height="1"/><rect x="396" y="9" width="1" height="1"/><rect x="396" y="13" width="1" height="1"/><rect x="398" y="11" width="1" height="1"/><rect x="400" y="9" width="1" height="1"/><rect x="400" y="13" width="1" height="1"/><rect x="402" y="11" width="1" height="1"/><rect x="404" y="9" width="1" height="1"/><rect x="404" y="13" width="1" height="1"/><rect x="406" y="11" width="1" height="1"/><rect x="408" y="9" width="1" height="1"/><rect x="408" y="13" width="1" height="1"/><rect x="410" y="11" width="1" height="1"/><rect x="412" y="9" width="1" height="1"/><rect x="412" y="13" width="1" height="1"/><rect x="414" y="11" width="1" height="1"/><rect x="416" y="9" width="1" height="1"/><rect x="416" y="13" width="1" height="1"/><rect x="418" y="11" width="1" height="1"/><rect x="420" y="9" width="1" height="1"/><rect x="420" y="13" width="1" height="1"/><rect x="422" y="11" width="1" height="1"/><rect x="424" y="9" width="1" height="1"/><rect x="424" y="13" width="1" height="1"/><rect x="426" y="11" width="1" height="1"/><rect x="428" y="9" width="1" height="1"/><rect x="428" y="13" width="1" height="1"/><rect x="430" y="11" width="1" height="1"/><rect x="432" y="9" width="1" height="1"/><rect x="432" y="13" width="1" height="1"/><rect x="434" y="11" width="1" height="1"/><rect x="436" y="9" width="1" height="1"/><rect x="436" y="13" width="1" height="1"/><rect x="438" y="11" width="1" height="1"/><rect x="440" y="9" width="1" height="1"/><rect x="440" y="13" width="1" height="1"/><rect x="442" y="11" width="1" height="1"/><rect x="444" y="9" width="1" height="1"/><rect x="444" y="13" width="1" height="1"/><rect x="446" y="11" width="1" height="1"/><rect x="448" y="9" width="1" height="1"/><rect x="448" y="13" width="1" height="1"/><rect x="450" y="11" width="1" height="1"/><rect x="452" y="9" width="1" height="1"/><rect x="452" y="13" width="1" height="1"/><rect x="454" y="11" width="1" height="1"/><rect x="456" y="9" width="1" height="1"/><rect x="456" y="13" width="1" height="1"/><rect x="458" y="11" width="1" height="1"/><rect x="460" y="9" width="1" height="1"/><rect x="460" y="13" width="1" height="1"/><rect x="462" y="11" width="1" height="1"/><rect x="464" y="9" width="1" height="1"/><rect x="464" y="13" width="1" height="1"/><rect x="466" y="11" width="1" height="1"/><rect x="468" y="9" width="1" height="1"/><rect x="468" y="13" width="1" height="1"/><rect x="470" y="11" width="1" height="1"/><rect x="472" y="9" width="1" height="1"/><rect x="472" y="13" width="1" height="1"/><rect x="474" y="11" width="1" height="1"/><rect x="476" y="9" width="1" height="1"/><rect x="476" y="13" width="1" height="1"/><rect x="478" y="11" width="1" height="1"/><rect x="480" y="9" width="1" height="1"/><rect x="480" y="13" width="1" height="1"/><rect x="482" y="11" width="1" height="1"/><rect x="484" y="9" width="1" height="1"/><rect x="484" y="13" width="1" height="1"/><rect x="486" y="11" width="1" height="1"/><rect x="488" y="9" width="1" height="1"/><rect x="488" y="13" width="1" height="1"/><rect x="490" y="11" width="1" height="1"/><rect x="492" y="9" width="1" height="1"/><rect x="492" y="13" width="1" height="1"/><rect x="494" y="11" width="1" height="1"/><rect x="496" y="9" width="1" height="1"/><rect x="496" y="13" width="1" height="1"/><rect x="498" y="11" width="1" height="1"/><rect x="500" y="9" width="1" height="1"/><rect x="500" y="13" width="1" height="1"/><rect x="502" y="11" width="1" height="1"/><rect x="504" y="9" width="1" height="1"/><rect x="504" y="13" width="1" height="1"/><rect x="506" y="11" width="1" height="1"/><rect x="508" y="9" width="1" height="1"/><rect x="508" y="13" width="1" height="1"/><rect x="510" y="11" width="1" height="1"/><rect x="512" y="9" width="1" height="1"/><rect x="512" y="13" width="1" height="1"/><rect x="514" y="11" width="1" height="1"/><rect x="516" y="9" width="1" height="1"/><rect x="516" y="13" width="1" height="1"/><rect x="518" y="11" width="1" height="1"/><rect x="520" y="9" width="1" height="1"/><rect x="520" y="13" width="1" height="1"/><rect x="522" y="11" width="1" height="1"/><rect x="524" y="9" width="1" height="1"/><rect x="524" y="13" width="1" height="1"/><rect x="526" y="11" width="1" height="1"/><rect x="528" y="9" width="1" height="1"/><rect x="528" y="13" width="1" height="1"/><rect x="530" y="11" width="1" height="1"/><rect x="532" y="9" width="1" height="1"/><rect x="532" y="13" width="1" height="1"/><rect x="534" y="11" width="1" height="1"/><rect x="536" y="9" width="1" height="1"/><rect x="536" y="13" width="1" height="1"/><rect x="538" y="11" width="1" height="1"/><rect x="540" y="9" width="1" height="1"/><rect x="540" y="13" width="1" height="1"/><rect x="542" y="11" width="1" height="1"/><rect x="544" y="9" width="1" height="1"/><rect x="544" y="13" width="1" height="1"/><rect x="546" y="11" width="1" height="1"/><rect x="548" y="9" width="1" height="1"/><rect x="548" y="13" width="1" height="1"/><rect x="550" y="11" width="1" height="1"/><rect x="552" y="9" width="1" height="1"/><rect x="552" y="13" width="1" height="1"/><rect x="554" y="11" width="1" height="1"/><rect x="556" y="9" width="1" height="1"/><rect x="556" y="13" width="1" height="1"/><rect x="558" y="11" width="1" height="1"/><rect x="560" y="9" width="1" height="1"/><rect x="560" y="13" width="1" height="1"/><rect x="562" y="11" width="1" height="1"/><rect x="564" y="9" width="1" height="1"/><rect x="564" y="13" width="1" height="1"/><rect x="566" y="11" width="1" height="1"/><rect x="568" y="9" width="1" height="1"/><rect x="568" y="13" width="1" height="1"/><rect x="570" y="11" width="1" height="1"/><rect x="572" y="9" width="1" height="1"/><rect x="572" y="13" width="1" height="1"/><rect x="574" y="11" width="1" height="1"/><rect x="576" y="9" width="1" height="1"/><rect x="576" y="13" width="1" height="1"/><rect x="578" y="11" width="1" height="1"/><rect x="580" y="9" width="1" height="1"/><rect x="580" y="13" width="1" height="1"/><rect x="582" y="11" width="1" height="1"/><rect x="584" y="9" width="1" height="1"/><rect x="584" y="13" width="1" height="1"/><rect x="586" y="11" width="1" height="1"/><rect x="588" y="9" width="1" height="1"/><rect x="588" y="13" width="1" height="1"/><rect x="590" y="11" width="1" height="1"/><rect x="592" y="9" width="1" height="1"/><rect x="592" y="13" width="1" height="1"/><rect x="594" y="11" width="1" height="1"/><rect x="596" y="9" width="1" height="1"/><rect x="596" y="13" width="1" height="1"/><rect x="598" y="11" width="1" height="1"/><rect x="600" y="9" width="1" height="1"/><rect x="600" y="13" width="1" height="1"/><rect x="602" y="11" width="1" height="1"/><rect x="604" y="9" width="1" height="1"/><rect x="604" y="13" width="1" height="1"/><rect x="606" y="11" width="1" height="1"/><rect x="608" y="9" width="1" height="1"/><rect x="608" y="13" width="1" height="1"/><rect x="610" y="11" width="1" height="1"/><rect x="612" y="9" width="1" height="1"/><rect x="612" y="13" width="1" height="1"/><rect x="614" y="11" width="1" height="1"/><rect x="616" y="9" width="1" height="1"/><rect x="616" y="13" width="1" height="1"/><rect x="618" y="11" width="1" height="1"/><rect x="620" y="9" width="1" height="1"/><rect x="620" y="13" width="1" height="1"/><rect x="622" y="11" width="1" height="1"/><rect x="624" y="9" width="1" height="1"/><rect x="624" y="13" width="1" height="1"/><rect x="626" y="11" width="1" height="1"/><rect x="628" y="9" width="1" height="1"/><rect x="628" y="13" width="1" height="1"/><rect x="630" y="11" width="1" height="1"/><rect x="632" y="9" width="1" height="1"/><rect x="632" y="13" width="1" height="1"/><rect x="634" y="11" width="1" height="1"/><rect x="636" y="9" width="1" height="1"/><rect x="636" y="13" width="1" height="1"/><rect x="638" y="11" width="1" height="1"/><rect x="640" y="9" width="1" height="1"/><rect x="640" y="13" width="1" height="1"/><rect x="642" y="11" width="1" height="1"/><rect x="644" y="9" width="1" height="1"/><rect x="644" y="13" width="1" height="1"/><rect x="646" y="11" width="1" height="1"/><rect x="648" y="9" width="1" height="1"/><rect x="648" y="13" width="1" height="1"/><rect x="650" y="11" width="1" height="1"/><rect x="652" y="9" width="1" height="1"/><rect x="652" y="13" width="1" height="1"/><rect x="654" y="11" width="1" height="1"/><rect x="656" y="9" width="1" height="1"/><rect x="656" y="13" width="1" height="1"/><rect x="658" y="11" width="1" height="1"/><rect x="660" y="9" width="1" height="1"/><rect x="660" y="13" width="1" height="1"/><rect x="662" y="11" width="1" height="1"/><rect x="664" y="9" width="1" height="1"/><rect x="664" y="13" width="1" height="1"/><rect x="666" y="11" width="1" height="1"/><rect x="668" y="9" width="1" height="1"/><rect x="668" y="13" width="1" height="1"/><rect x="670" y="11" width="1" height="1"/><rect x="672" y="9" width="1" height="1"/><rect x="672" y="13" width="1" height="1"/><rect x="674" y="11" width="1" height="1"/><rect x="676" y="9" width="1" height="1"/><rect x="676" y="13" width="1" height="1"/><rect x="678" y="11" width="1" height="1"/><rect x="680" y="9" width="1" height="1"/><rect x="680" y="13" width="1" height="1"/><rect x="682" y="11" width="1" height="1"/><rect x="684" y="9" width="1" height="1"/><rect x="684" y="13" width="1" height="1"/><rect x="686" y="11" width="1" height="1"/><rect x="688" y="9" width="1" height="1"/><rect x="688" y="13" width="1" height="1"/><rect x="690" y="11" width="1" height="1"/><rect x="692" y="9" width="1" height="1"/><rect x="692" y="13" width="1" height="1"/><rect x="694" y="11" width="1" height="1"/><rect x="696" y="9" width="1" height="1"/><rect x="696" y="13" width="1" height="1"/><rect x="698" y="11" width="1" height="1"/><rect x="700" y="9" width="1" height="1"/><rect x="700" y="13" width="1" height="1"/><rect x="702" y="11" width="1" height="1"/><rect x="704" y="9" width="1" height="1"/><rect x="704" y="13" width="1" height="1"/><rect x="706" y="11" width="1" height="1"/><rect x="708" y="9" width="1" height="1"/><rect x="708" y="13" width="1" height="1"/><rect x="710" y="11" width="1" height="1"/><rect x="712" y="9" width="1" height="1"/><rect x="712" y="13" width="1" height="1"/></g><path d="M719 11h8l-4 4z" fill="#dcbcdc"/><g fill="#dcbcdc"><rect x="736" y="6" width="6" height="1.5"/><rect x="737" y="6" width="1.3" height="7"/><rect x="740.5" y="6" width="1.3" height="7"/><rect x="735" y="12" width="8" height="1.3"/><rect x="738.5" y="13" width="1.2" height="3"/></g><path d="M751 7L759 15M759 7L751 15" stroke="#dcbcdc" stroke-width="1.3"/></svg>
<div class="ab" style="left:1147px;top:108px;width:766px;height:525px;background:#fafafa;border-left:1px solid #d0d0d0"></div>
<div class="ab" style="left:1158px;top:113px;width:745px;height:21px;background:#fff;border:1px solid #5aaef0;box-shadow:inset 0 0 0 1px #d8ecfb"></div>
<div class="ab" style="left:1163px;top:116px;width:1px;height:15px;background:#000"></div>
<div class="t" style="left:1164px;top:117px;font-style:italic;color:#8a8a8a">Filtro</div>
<svg class="ab" style="left:1884px;top:115px" width="14" height="14"><circle cx="8" cy="5.5" r="3.8" fill="none" stroke="#1f4e9a" stroke-width="1.4"/><path d="M5.3 8.3L1.5 12" stroke="#1f4e9a" stroke-width="1.8"/></svg>
<div class="ab" style="left:1148px;top:139px;width:765px;height:494px;background:#fafafa;border:1px solid #b0b0b0;border-bottom:none"></div>
<div class="ab" style="left:1149px;top:140px;width:746px;height:20px;background:#f0f0f0;border-bottom:1px solid #d8d8d8"></div>
<div class="ab" style="left:1183px;top:140px;width:1px;height:19px;background:#d8d8d8"></div>
<div class="ab" style="left:1323px;top:140px;width:1px;height:19px;background:#d8d8d8"></div>
<div class="ab" style="left:1378px;top:140px;width:1px;height:19px;background:#d8d8d8"></div>
<div class="ab" style="left:1433px;top:140px;width:1px;height:19px;background:#d8d8d8"></div>
<div class="ab" style="left:1513px;top:140px;width:1px;height:19px;background:#d8d8d8"></div>
<div class="ab" style="left:1593px;top:140px;width:1px;height:19px;background:#d8d8d8"></div>
<div class="ab" style="left:1743px;top:140px;width:1px;height:19px;background:#d8d8d8"></div>
<div class="ab" style="left:1894px;top:140px;width:1px;height:19px;background:#d8d8d8"></div>
<div class="t" style="left:1191px;top:143px">Nome</div>
<div class="t" style="left:1331px;top:143px">Versio...</div>
<div class="t" style="left:1388px;top:143px">Online</div>
<div class="t" style="left:1441px;top:143px">Percorso</div>
<div class="t" style="left:1521px;top:143px">Piattaforme</div>
<div class="t" style="left:1601px;top:143px">Commento</div>
<div class="ab" style="left:1149px;top:182px;width:594px;height:1px;background:#efefef"></div>
<div class="ab" style="left:1183px;top:160px;width:1px;height:23px;background:#efefef"></div>
<div class="ab" style="left:1323px;top:160px;width:1px;height:23px;background:#efefef"></div>
<div class="ab" style="left:1378px;top:160px;width:1px;height:23px;background:#efefef"></div>
<div class="ab" style="left:1433px;top:160px;width:1px;height:23px;background:#efefef"></div>
<div class="ab" style="left:1513px;top:160px;width:1px;height:23px;background:#efefef"></div>
<div class="ab" style="left:1593px;top:160px;width:1px;height:23px;background:#efefef"></div>
<div class="ab" style="left:1159px;top:164px;width:14px;height:14px;border:1px solid #7a7a7a;background:#fff"></div>
<svg class="ab" style="left:1159px;top:164px" width="14" height="14"><path d="M3.2 7.2L5.8 10.3L10.8 3.2" fill="none" stroke="#5a5a5a" stroke-width="1.5"/></svg>
<div class="t" style="left:1191px;top:165px">ByteConverter</div>
<div class="t" style="left:1323px;top:165px;width:55px;text-align:center">1.10</div>
<div class="t" style="left:1378px;top:165px;width:55px;text-align:center;color:#1e1ef0">1.10</div>
<div class="t" style="left:1441px;top:165px">Internal</div>
<div class="t" style="left:1521px;top:165px">B4J</div>
<div class="ab" style="left:1149px;top:205px;width:594px;height:1px;background:#efefef"></div>
<div class="ab" style="left:1183px;top:183px;width:1px;height:23px;background:#efefef"></div>
<div class="ab" style="left:1323px;top:183px;width:1px;height:23px;background:#efefef"></div>
<div class="ab" style="left:1378px;top:183px;width:1px;height:23px;background:#efefef"></div>
<div class="ab" style="left:1433px;top:183px;width:1px;height:23px;background:#efefef"></div>
<div class="ab" style="left:1513px;top:183px;width:1px;height:23px;background:#efefef"></div>
<div class="ab" style="left:1593px;top:183px;width:1px;height:23px;background:#efefef"></div>
<div class="ab" style="left:1159px;top:187px;width:14px;height:14px;border:1px solid #7a7a7a;background:#fff"></div>
<svg class="ab" style="left:1159px;top:187px" width="14" height="14"><path d="M3.2 7.2L5.8 10.3L10.8 3.2" fill="none" stroke="#5a5a5a" stroke-width="1.5"/></svg>
<div class="t" style="left:1191px;top:188px">JavaObject</div>
<div class="t" style="left:1323px;top:188px;width:55px;text-align:center">2.06</div>
<div class="t" style="left:1378px;top:188px;width:55px;text-align:center;color:#1e1ef0">2.06</div>
<div class="t" style="left:1441px;top:188px">Internal</div>
<div class="t" style="left:1521px;top:188px">B4J</div>
<div class="ab" style="left:1149px;top:228px;width:594px;height:1px;background:#efefef"></div>
<div class="ab" style="left:1183px;top:206px;width:1px;height:23px;background:#efefef"></div>
<div class="ab" style="left:1323px;top:206px;width:1px;height:23px;background:#efefef"></div>
<div class="ab" style="left:1378px;top:206px;width:1px;height:23px;background:#efefef"></div>
<div class="ab" style="left:1433px;top:206px;width:1px;height:23px;background:#efefef"></div>
<div class="ab" style="left:1513px;top:206px;width:1px;height:23px;background:#efefef"></div>
<div class="ab" style="left:1593px;top:206px;width:1px;height:23px;background:#efefef"></div>
<div class="ab" style="left:1159px;top:210px;width:14px;height:14px;border:1px solid #7a7a7a;background:#fff"></div>
<svg class="ab" style="left:1159px;top:210px" width="14" height="14"><path d="M3.2 7.2L5.8 10.3L10.8 3.2" fill="none" stroke="#5a5a5a" stroke-width="1.5"/></svg>
<div class="t" style="left:1191px;top:211px">jCore</div>
<div class="t" style="left:1323px;top:211px;width:55px;text-align:center">9.80</div>
<div class="t" style="left:1378px;top:211px;width:55px;text-align:center;color:#1e1ef0">9.80</div>
<div class="t" style="left:1441px;top:211px">Internal</div>
<div class="t" style="left:1521px;top:211px">B4J</div>
<div class="ab" style="left:1149px;top:251px;width:594px;height:1px;background:#efefef"></div>
<div class="ab" style="left:1183px;top:229px;width:1px;height:23px;background:#efefef"></div>
<div class="ab" style="left:1323px;top:229px;width:1px;height:23px;background:#efefef"></div>
<div class="ab" style="left:1378px;top:229px;width:1px;height:23px;background:#efefef"></div>
<div class="ab" style="left:1433px;top:229px;width:1px;height:23px;background:#efefef"></div>
<div class="ab" style="left:1513px;top:229px;width:1px;height:23px;background:#efefef"></div>
<div class="ab" style="left:1593px;top:229px;width:1px;height:23px;background:#efefef"></div>
<div class="ab" style="left:1159px;top:233px;width:14px;height:14px;border:1px solid #7a7a7a;background:#fff"></div>
<svg class="ab" style="left:1159px;top:233px" width="14" height="14"><path d="M3.2 7.2L5.8 10.3L10.8 3.2" fill="none" stroke="#5a5a5a" stroke-width="1.5"/></svg>
<div class="t" style="left:1191px;top:234px">jServer</div>
<div class="t" style="left:1323px;top:234px;width:55px;text-align:center">4.01</div>
<div class="t" style="left:1378px;top:234px;width:55px;text-align:center;color:#1e1ef0">4.01</div>
<div class="t" style="left:1441px;top:234px">Internal</div>
<div class="t" style="left:1521px;top:234px">B4J</div>
<div class="ab" style="left:1149px;top:274px;width:594px;height:1px;background:#efefef"></div>
<div class="ab" style="left:1183px;top:252px;width:1px;height:23px;background:#efefef"></div>
<div class="ab" style="left:1323px;top:252px;width:1px;height:23px;background:#efefef"></div>
<div class="ab" style="left:1378px;top:252px;width:1px;height:23px;background:#efefef"></div>
<div class="ab" style="left:1433px;top:252px;width:1px;height:23px;background:#efefef"></div>
<div class="ab" style="left:1513px;top:252px;width:1px;height:23px;background:#efefef"></div>
<div class="ab" style="left:1593px;top:252px;width:1px;height:23px;background:#efefef"></div>
<div class="ab" style="left:1159px;top:256px;width:14px;height:14px;border:1px solid #7a7a7a;background:#fff"></div>
<svg class="ab" style="left:1159px;top:256px" width="14" height="14"><path d="M3.2 7.2L5.8 10.3L10.8 3.2" fill="none" stroke="#5a5a5a" stroke-width="1.5"/></svg>
<div class="t" style="left:1191px;top:257px">Json</div>
<div class="t" style="left:1323px;top:257px;width:55px;text-align:center">1.21</div>
<div class="t" style="left:1378px;top:257px;width:55px;text-align:center;color:#1e1ef0">1.21</div>
<div class="t" style="left:1441px;top:257px">Internal</div>
<div class="t" style="left:1521px;top:257px">B4J</div>
<div class="ab" style="left:1149px;top:297px;width:594px;height:1px;background:#efefef"></div>
<div class="ab" style="left:1183px;top:275px;width:1px;height:23px;background:#efefef"></div>
<div class="ab" style="left:1323px;top:275px;width:1px;height:23px;background:#efefef"></div>
<div class="ab" style="left:1378px;top:275px;width:1px;height:23px;background:#efefef"></div>
<div class="ab" style="left:1433px;top:275px;width:1px;height:23px;background:#efefef"></div>
<div class="ab" style="left:1513px;top:275px;width:1px;height:23px;background:#efefef"></div>
<div class="ab" style="left:1593px;top:275px;width:1px;height:23px;background:#efefef"></div>
<div class="ab" style="left:1159px;top:279px;width:14px;height:14px;border:1px solid #7a7a7a;background:#fff"></div>
<svg class="ab" style="left:1159px;top:279px" width="14" height="14"><path d="M3.2 7.2L5.8 10.3L10.8 3.2" fill="none" stroke="#5a5a5a" stroke-width="1.5"/></svg>
<div class="t" style="left:1191px;top:280px">jStringUtils</div>
<div class="t" style="left:1323px;top:280px;width:55px;text-align:center">1.03</div>
<div class="t" style="left:1441px;top:280px">Internal</div>
<div class="t" style="left:1521px;top:280px">B4J</div>
<div class="ab" style="left:1149px;top:320px;width:594px;height:1px;background:#efefef"></div>
<div class="ab" style="left:1183px;top:298px;width:1px;height:23px;background:#efefef"></div>
<div class="ab" style="left:1323px;top:298px;width:1px;height:23px;background:#efefef"></div>
<div class="ab" style="left:1378px;top:298px;width:1px;height:23px;background:#efefef"></div>
<div class="ab" style="left:1433px;top:298px;width:1px;height:23px;background:#efefef"></div>
<div class="ab" style="left:1513px;top:298px;width:1px;height:23px;background:#efefef"></div>
<div class="ab" style="left:1593px;top:298px;width:1px;height:23px;background:#efefef"></div>
<div class="ab" style="left:1159px;top:302px;width:14px;height:14px;border:1px solid #7a7a7a;background:#fff"></div>
<svg class="ab" style="left:1159px;top:302px" width="14" height="14"><path d="M3.2 7.2L5.8 10.3L10.8 3.2" fill="none" stroke="#5a5a5a" stroke-width="1.5"/></svg>
<div class="t" style="left:1191px;top:303px">MinimaListUtils</div>
<div class="t" style="left:1323px;top:303px;width:55px;text-align:center">1.02</div>
<div class="t" style="left:1441px;top:303px">Additional</div>
<div class="t" style="left:1521px;top:303px">B4A, B4i, B4J</div>
<div class="ab" style="left:1149px;top:343px;width:594px;height:1px;background:#efefef"></div>
<div class="ab" style="left:1183px;top:321px;width:1px;height:23px;background:#efefef"></div>
<div class="ab" style="left:1323px;top:321px;width:1px;height:23px;background:#efefef"></div>
<div class="ab" style="left:1378px;top:321px;width:1px;height:23px;background:#efefef"></div>
<div class="ab" style="left:1433px;top:321px;width:1px;height:23px;background:#efefef"></div>
<div class="ab" style="left:1513px;top:321px;width:1px;height:23px;background:#efefef"></div>
<div class="ab" style="left:1593px;top:321px;width:1px;height:23px;background:#efefef"></div>
<div class="ab" style="left:1159px;top:325px;width:14px;height:14px;border:1px solid #7a7a7a;background:#fff"></div>
<svg class="ab" style="left:1159px;top:325px" width="14" height="14"><path d="M3.2 7.2L5.8 10.3L10.8 3.2" fill="none" stroke="#5a5a5a" stroke-width="1.5"/></svg>
<div class="t" style="left:1191px;top:326px">MiniORMUtils</div>
<div class="t" style="left:1323px;top:326px;width:55px;text-align:center">1.08</div>
<div class="t" style="left:1441px;top:326px">Additional</div>
<div class="t" style="left:1521px;top:326px">B4A, B4i, B4J</div>
<div class="ab" style="left:1149px;top:366px;width:594px;height:1px;background:#efefef"></div>
<div class="ab" style="left:1183px;top:344px;width:1px;height:23px;background:#efefef"></div>
<div class="ab" style="left:1323px;top:344px;width:1px;height:23px;background:#efefef"></div>
<div class="ab" style="left:1378px;top:344px;width:1px;height:23px;background:#efefef"></div>
<div class="ab" style="left:1433px;top:344px;width:1px;height:23px;background:#efefef"></div>
<div class="ab" style="left:1513px;top:344px;width:1px;height:23px;background:#efefef"></div>
<div class="ab" style="left:1593px;top:344px;width:1px;height:23px;background:#efefef"></div>
<div class="ab" style="left:1159px;top:348px;width:14px;height:14px;border:1px solid #7a7a7a;background:#fff"></div>
<svg class="ab" style="left:1159px;top:348px" width="14" height="14"><path d="M3.2 7.2L5.8 10.3L10.8 3.2" fill="none" stroke="#5a5a5a" stroke-width="1.5"/></svg>
<div class="t" style="left:1191px;top:349px">WebApiController</div>
<div class="t" style="left:1323px;top:349px;width:55px;text-align:center">1.04</div>
<div class="t" style="left:1441px;top:349px">Additional</div>
<div class="t" style="left:1521px;top:349px">B4J</div>
<div class="ab" style="left:1149px;top:389px;width:594px;height:1px;background:#efefef"></div>
<div class="ab" style="left:1183px;top:367px;width:1px;height:23px;background:#efefef"></div>
<div class="ab" style="left:1323px;top:367px;width:1px;height:23px;background:#efefef"></div>
<div class="ab" style="left:1378px;top:367px;width:1px;height:23px;background:#efefef"></div>
<div class="ab" style="left:1433px;top:367px;width:1px;height:23px;background:#efefef"></div>
<div class="ab" style="left:1513px;top:367px;width:1px;height:23px;background:#efefef"></div>
<div class="ab" style="left:1593px;top:367px;width:1px;height:23px;background:#efefef"></div>
<div class="ab" style="left:1159px;top:371px;width:14px;height:14px;border:1px solid #7a7a7a;background:#fff"></div>
<svg class="ab" style="left:1159px;top:371px" width="14" height="14"><path d="M3.2 7.2L5.8 10.3L10.8 3.2" fill="none" stroke="#5a5a5a" stroke-width="1.5"/></svg>
<div class="t" style="left:1191px;top:372px">WebApiUtils</div>
<div class="t" style="left:1323px;top:372px;width:55px;text-align:center">2.05</div>
<div class="t" style="left:1441px;top:372px">Additional</div>
<div class="t" style="left:1521px;top:372px">B4J</div>
<div class="ab" style="left:1149px;top:412px;width:594px;height:1px;background:#efefef"></div>
<div class="ab" style="left:1183px;top:390px;width:1px;height:23px;background:#efefef"></div>
<div class="ab" style="left:1323px;top:390px;width:1px;height:23px;background:#efefef"></div>
<div class="ab" style="left:1378px;top:390px;width:1px;height:23px;background:#efefef"></div>
<div class="ab" style="left:1433px;top:390px;width:1px;height:23px;background:#efefef"></div>
<div class="ab" style="left:1513px;top:390px;width:1px;height:23px;background:#efefef"></div>
<div class="ab" style="left:1593px;top:390px;width:1px;height:23px;background:#efefef"></div>
<div class="ab" style="left:1159px;top:394px;width:14px;height:14px;border:1px solid #7a7a7a;background:#fff"></div>
<div class="t" style="left:1191px;top:395px">AnimatedSvgView</div>
<div class="t" style="left:1441px;top:395px">Additional</div>
<div class="ab" style="left:1149px;top:435px;width:594px;height:1px;background:#efefef"></div>
<div class="ab" style="left:1183px;top:413px;width:1px;height:23px;background:#efefef"></div>
<div class="ab" style="left:1323px;top:413px;width:1px;height:23px;background:#efefef"></div>
<div class="ab" style="left:1378px;top:413px;width:1px;height:23px;background:#efefef"></div>
<div class="ab" style="left:1433px;top:413px;width:1px;height:23px;background:#efefef"></div>
<div class="ab" style="left:1513px;top:413px;width:1px;height:23px;background:#efefef"></div>
<div class="ab" style="left:1593px;top:413px;width:1px;height:23px;background:#efefef"></div>
<div class="ab" style="left:1159px;top:417px;width:14px;height:14px;border:1px solid #7a7a7a;background:#fff"></div>
<div class="t" style="left:1191px;top:418px">B4XCollections</div>
<div class="t" style="left:1378px;top:418px;width:55px;text-align:center;color:#1e1ef0">1.13</div>
<div class="t" style="left:1441px;top:418px">Internal</div>
<div class="ab" style="left:1149px;top:458px;width:594px;height:1px;background:#efefef"></div>
<div class="ab" style="left:1183px;top:436px;width:1px;height:23px;background:#efefef"></div>
<div class="ab" style="left:1323px;top:436px;width:1px;height:23px;background:#efefef"></div>
<div class="ab" style="left:1378px;top:436px;width:1px;height:23px;background:#efefef"></div>
<div class="ab" style="left:1433px;top:436px;width:1px;height:23px;background:#efefef"></div>
<div class="ab" style="left:1513px;top:436px;width:1px;height:23px;background:#efefef"></div>
<div class="ab" style="left:1593px;top:436px;width:1px;height:23px;background:#efefef"></div>
<div class="ab" style="left:1159px;top:440px;width:14px;height:14px;border:1px solid #7a7a7a;background:#fff"></div>
<div class="t" style="left:1191px;top:441px">B4XDrawer</div>
<div class="t" style="left:1378px;top:441px;width:55px;text-align:center;color:#1e1ef0">1.55</div>
<div class="t" style="left:1441px;top:441px">Internal</div>
<div class="ab" style="left:1149px;top:481px;width:594px;height:1px;background:#efefef"></div>
<div class="ab" style="left:1183px;top:459px;width:1px;height:23px;background:#efefef"></div>
<div class="ab" style="left:1323px;top:459px;width:1px;height:23px;background:#efefef"></div>
<div class="ab" style="left:1378px;top:459px;width:1px;height:23px;background:#efefef"></div>
<div class="ab" style="left:1433px;top:459px;width:1px;height:23px;background:#efefef"></div>
<div class="ab" style="left:1513px;top:459px;width:1px;height:23px;background:#efefef"></div>
<div class="ab" style="left:1593px;top:459px;width:1px;height:23px;background:#efefef"></div>
<div class="ab" style="left:1159px;top:463px;width:14px;height:14px;border:1px solid #7a7a7a;background:#fff"></div>
<div class="t" style="left:1191px;top:464px">B4XFormatter</div>
<div class="t" style="left:1378px;top:464px;width:55px;text-align:center;color:#1e1ef0">1.04</div>
<div class="t" style="left:1441px;top:464px">Internal</div>
<div class="ab" style="left:1149px;top:504px;width:594px;height:1px;background:#efefef"></div>
<div class="ab" style="left:1183px;top:482px;width:1px;height:23px;background:#efefef"></div>
<div class="ab" style="left:1323px;top:482px;width:1px;height:23px;background:#efefef"></div>
<div class="ab" style="left:1378px;top:482px;width:1px;height:23px;background:#efefef"></div>
<div class="ab" style="left:1433px;top:482px;width:1px;height:23px;background:#efefef"></div>
<div class="ab" style="left:1513px;top:482px;width:1px;height:23px;background:#efefef"></div>
<div class="ab" style="left:1593px;top:482px;width:1px;height:23px;background:#efefef"></div>
<div class="ab" style="left:1159px;top:486px;width:14px;height:14px;border:1px solid #7a7a7a;background:#fff"></div>
<div class="t" style="left:1191px;top:487px">B4XPages</div>
<div class="t" style="left:1378px;top:487px;width:55px;text-align:center;color:#1e1ef0">1.11</div>
<div class="t" style="left:1441px;top:487px">Internal</div>
<div class="ab" style="left:1149px;top:527px;width:594px;height:1px;background:#efefef"></div>
<div class="ab" style="left:1183px;top:505px;width:1px;height:23px;background:#efefef"></div>
<div class="ab" style="left:1323px;top:505px;width:1px;height:23px;background:#efefef"></div>
<div class="ab" style="left:1378px;top:505px;width:1px;height:23px;background:#efefef"></div>
<div class="ab" style="left:1433px;top:505px;width:1px;height:23px;background:#efefef"></div>
<div class="ab" style="left:1513px;top:505px;width:1px;height:23px;background:#efefef"></div>
<div class="ab" style="left:1593px;top:505px;width:1px;height:23px;background:#efefef"></div>
<div class="ab" style="left:1159px;top:509px;width:14px;height:14px;border:1px solid #7a7a7a;background:#fff"></div>
<div class="t" style="left:1191px;top:510px">B4XPreferencesDialo</div>
<div class="t" style="left:1378px;top:510px;width:55px;text-align:center;color:#1e1ef0">1.75</div>
<div class="t" style="left:1441px;top:510px">Internal</div>
<div class="ab" style="left:1149px;top:550px;width:594px;height:1px;background:#efefef"></div>
<div class="ab" style="left:1183px;top:528px;width:1px;height:23px;background:#efefef"></div>
<div class="ab" style="left:1323px;top:528px;width:1px;height:23px;background:#efefef"></div>
<div class="ab" style="left:1378px;top:528px;width:1px;height:23px;background:#efefef"></div>
<div class="ab" style="left:1433px;top:528px;width:1px;height:23px;background:#efefef"></div>
<div class="ab" style="left:1513px;top:528px;width:1px;height:23px;background:#efefef"></div>
<div class="ab" style="left:1593px;top:528px;width:1px;height:23px;background:#efefef"></div>
<div class="ab" style="left:1159px;top:532px;width:14px;height:14px;border:1px solid #7a7a7a;background:#fff"></div>
<div class="t" style="left:1191px;top:533px">B4XTable</div>
<div class="t" style="left:1378px;top:533px;width:55px;text-align:center;color:#1e1ef0">1.24</div>
<div class="t" style="left:1441px;top:533px">Internal</div>
<div class="ab" style="left:1149px;top:573px;width:594px;height:1px;background:#efefef"></div>
<div class="ab" style="left:1183px;top:551px;width:1px;height:23px;background:#efefef"></div>
<div class="ab" style="left:1323px;top:551px;width:1px;height:23px;background:#efefef"></div>
<div class="ab" style="left:1378px;top:551px;width:1px;height:23px;background:#efefef"></div>
<div class="ab" style="left:1433px;top:551px;width:1px;height:23px;background:#efefef"></div>
<div class="ab" style="left:1513px;top:551px;width:1px;height:23px;background:#efefef"></div>
<div class="ab" style="left:1593px;top:551px;width:1px;height:23px;background:#efefef"></div>
<div class="ab" style="left:1159px;top:555px;width:14px;height:14px;border:1px solid #7a7a7a;background:#fff"></div>
<div class="t" style="left:1191px;top:556px">B4XTurtle</div>
<div class="t" style="left:1378px;top:556px;width:55px;text-align:center;color:#1e1ef0">1.06</div>
<div class="t" style="left:1441px;top:556px">Internal</div>
<div class="ab" style="left:1149px;top:596px;width:594px;height:1px;background:#efefef"></div>
<div class="ab" style="left:1183px;top:574px;width:1px;height:23px;background:#efefef"></div>
<div class="ab" style="left:1323px;top:574px;width:1px;height:23px;background:#efefef"></div>
<div class="ab" style="left:1378px;top:574px;width:1px;height:23px;background:#efefef"></div>
<div class="ab" style="left:1433px;top:574px;width:1px;height:23px;background:#efefef"></div>
<div class="ab" style="left:1513px;top:574px;width:1px;height:23px;background:#efefef"></div>
<div class="ab" style="left:1593px;top:574px;width:1px;height:23px;background:#efefef"></div>
<div class="ab" style="left:1159px;top:578px;width:14px;height:14px;border:1px solid #7a7a7a;background:#fff"></div>
<div class="t" style="left:1191px;top:579px">BCTextEngine</div>
<div class="t" style="left:1378px;top:579px;width:55px;text-align:center;color:#1e1ef0">1.95</div>
<div class="t" style="left:1441px;top:579px">Internal</div>
<div class="ab" style="left:1149px;top:619px;width:594px;height:1px;background:#efefef"></div>
<div class="ab" style="left:1183px;top:597px;width:1px;height:23px;background:#efefef"></div>
<div class="ab" style="left:1323px;top:597px;width:1px;height:23px;background:#efefef"></div>
<div class="ab" style="left:1378px;top:597px;width:1px;height:23px;background:#efefef"></div>
<div class="ab" style="left:1433px;top:597px;width:1px;height:23px;background:#efefef"></div>
<div class="ab" style="left:1513px;top:597px;width:1px;height:23px;background:#efefef"></div>
<div class="ab" style="left:1593px;top:597px;width:1px;height:23px;background:#efefef"></div>
<div class="ab" style="left:1159px;top:601px;width:14px;height:14px;border:1px solid #7a7a7a;background:#fff"></div>
<div class="t" style="left:1191px;top:602px">BCToast</div>
<div class="t" style="left:1378px;top:602px;width:55px;text-align:center;color:#1e1ef0">1.01</div>
<div class="t" style="left:1441px;top:602px">Internal</div>
<div class="ab" style="left:1149px;top:642px;width:594px;height:1px;background:#efefef"></div>
<div class="ab" style="left:1183px;top:620px;width:1px;height:23px;background:#efefef"></div>
<div class="ab" style="left:1323px;top:620px;width:1px;height:23px;background:#efefef"></div>
<div class="ab" style="left:1378px;top:620px;width:1px;height:23px;background:#efefef"></div>
<div class="ab" style="left:1433px;top:620px;width:1px;height:23px;background:#efefef"></div>
<div class="ab" style="left:1513px;top:620px;width:1px;height:23px;background:#efefef"></div>
<div class="ab" style="left:1593px;top:620px;width:1px;height:23px;background:#efefef"></div>
<div class="ab" style="left:1159px;top:624px;width:14px;height:14px;border:1px solid #7a7a7a;background:#fff"></div>
<div class="t" style="left:1191px;top:625px">BetterDialogs</div>
<div class="t" style="left:1441px;top:625px">Additional</div>
<div class="ab" style="left:1895px;top:140px;width:16px;height:493px;background:#f0f0f0"></div>
<div class="ab" style="left:1896px;top:140px;width:14px;height:16px;background:#fff;border:1px solid #a8a8a8"></div>
<svg class="ab" style="left:1899px;top:145px" width="9" height="5"><path d="M0 4h8l-4-4z" fill="#a8a8a8"/></svg>
<div class="ab" style="left:1896px;top:157px;width:14px;height:385px;background:#fff;border:1px solid #a8a8a8"></div>
<div class="ab" style="left:1911px;top:139px;width:2px;height:494px;background:#b0b0b0"></div>
</body></html>
